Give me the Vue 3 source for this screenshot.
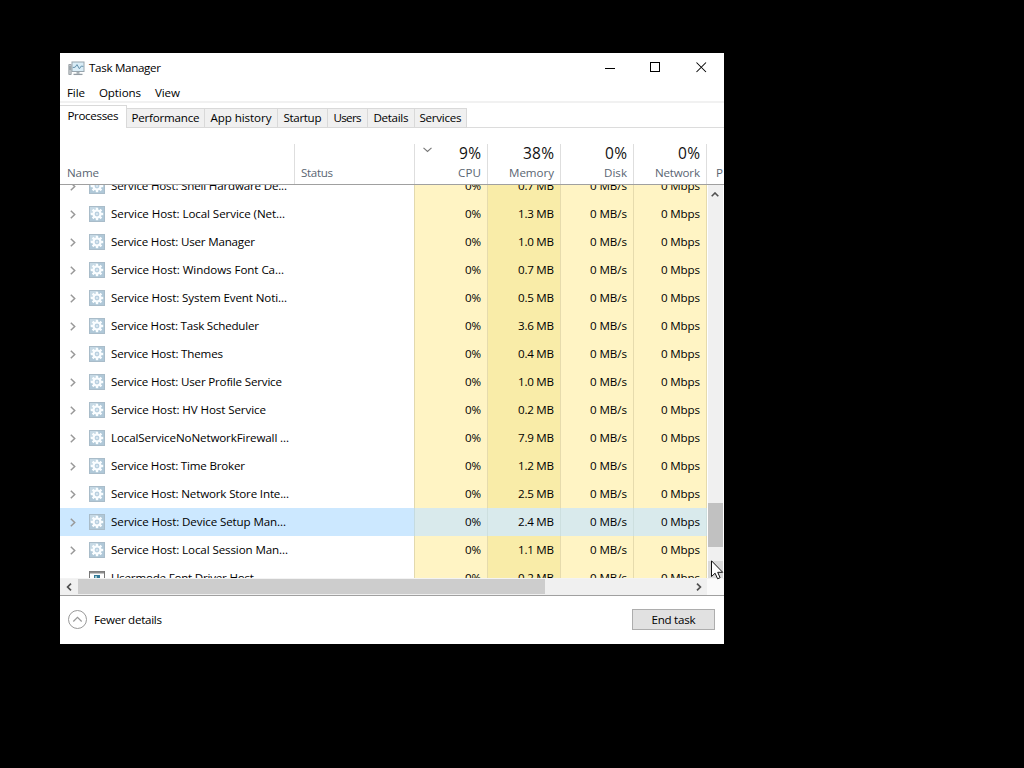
<script setup>
const rows = [
  ['Service Host: Shell Hardware De...', 176, '0.7'],
  ['Service Host: Local Service (Net...', 174, '1.3'],
  ['Service Host: User Manager', 144, '1.0'],
  ['Service Host: Windows Font Ca...', 173, '0.7'],
  ['Service Host: System Event Noti...', 176, '0.5'],
  ['Service Host: Task Scheduler', 148, '3.6'],
  ['Service Host: Themes', 112, '0.4'],
  ['Service Host: User Profile Service', 171, '1.0'],
  ['Service Host: HV Host Service', 155, '0.2'],
  ['LocalServiceNoNetworkFirewall ...', 178, '7.9'],
  ['Service Host: Time Broker', 134, '1.2'],
  ['Service Host: Network Store Inte...', 178, '2.5'],
  ['Service Host: Device Setup Man...', 175, '2.4', true],
  ['Service Host: Local Session Man...', 177, '1.1'],
  ['Usermode Font Driver Host', 143, '0.2'],
].map(([name, width, mem, selected]) => ({ name, width, mem, selected }))

const tabs = [
  ['Performance', 68, 78],
  ['App history', 61, 73],
  ['Startup', 38, 50],
  ['Users', 28, 40],
  ['Details', 35, 47],
  ['Services', 42, 52],
]

const heads = [
  ['9%', 22, 'CPU', 23],
  ['38%', 31, 'Memory', 45],
  ['0%', 22, 'Disk', 23],
  ['0%', 22, 'Network', 45],
]

// Tracks a label so that it fills the given width in pixels.
const vFit = {
  mounted(el, { value }) {
    el.style.letterSpacing = '0px'
    const n = el.textContent.length - 1
    const s = (value - el.getBoundingClientRect().width) / n
    el.style.letterSpacing = s + 'px'
    el.style.marginRight = -s + 'px'
  },
}
const teeth = [0, 45, 90, 135, 180, 225, 270, 315]
</script>

<template>
  <div class="desktop">
    <div class="window">
      <header class="title">
        <svg class="app-icon" width="17" height="15" viewBox="0 0 17 15">
          <path d="M.8 3.500h2.400v10H.8z" fill="#c9ced2" stroke="#8d959b" stroke-width=".8" />
          <path d="M1 6h2M1 8h2" stroke="#697a82" stroke-width=".7" />
          <rect x="4" y="1" width="12" height="9.500" fill="#d9edf7" stroke="#98a5ae" />
          <path d="M4.800 6.500l2.400-.3L9 3.600l2.400 4.200 1.800-2.700 2.200.3" fill="none" stroke="#6592ad" stroke-width="1" />
          <path d="M8.500 11h3v1.800h-3z" fill="#a8b0b5" />
          <path d="M5.500 13.400h9" stroke="#939ca3" stroke-width="1.300" />
        </svg>
        <span v-fit="72">Task Manager</span>
        <svg class="controls" width="103" height="11" viewBox="0 0 103 11">
          <path d="M0 6.500h10" stroke="#000" shape-rendering="crispEdges" />
          <rect x="45.500" y=".5" width="9" height="9" fill="none" stroke="#000" shape-rendering="crispEdges" />
          <path d="M91.500 .5l9.500 9.500M101 .5l-9.500 9.500" stroke="#000" stroke-width="1.050" />
        </svg>
      </header>
      <nav class="menu"><span v-fit="18">File</span><span v-fit="42">Options</span><span v-fit="25">View</span></nav>
      <div class="tabs">
        <div class="tab active"><span v-fit="51">Processes</span></div>
        <div v-for="t in tabs" :key="t[0]" class="tab" :style="{ width: t[2] + 'px' }"><span v-fit="t[1]">{{ t[0] }}</span></div>
      </div>
      <div class="head">
        <div class="h name"><span v-fit="32">Name</span></div>
        <div class="h status"><span v-fit="32">Status</span></div>
        <div v-for="(h, i) in heads" :key="i" class="h num">
          <svg v-if="i === 0" class="sort" width="9" height="6" viewBox="0 0 9 6"><path d="M.5 .8l4 3.700 4-3.700" fill="none" stroke="#777" stroke-width="1.100" /></svg>
          <b v-fit="h[1]">{{ h[0] }}</b>
          <span v-fit="h[3]">{{ h[2] }}</span>
        </div>
        <div class="h last"><span>P</span></div>
      </div>
      <div class="body">
        <div class="list">
          <div class="rows">
            <div v-for="(r, i) in rows" :key="r.name" class="row" :class="{ selected: r.selected }">
              <div class="c name">
                <svg class="chev" width="6" height="9" viewBox="0 0 6 9"><path v-if="i < 14" d="M.8 .7l3.900 3.800-3.900 3.800" fill="none" stroke="#999" stroke-width="1.500" /></svg>
                <svg v-if="i < 14" class="icon" width="16" height="16" viewBox="0 0 16 16">
                  <rect x=".5" y=".5" width="15" height="15" fill="#b0c8d8" stroke="#a9bcc9" />
                  <path d="M1 1h8L1 9z" fill="#c6d9e5" />
                  <g transform="translate(8 8)" fill="#fafdff">
                    <rect v-for="a in teeth" :key="a" x="-1.200" y="-6.200" width="2.400" height="3" :transform="`rotate(${a})`" />
                    <circle r="3.500" fill="#b9d0e0" stroke="#fafdff" stroke-width="2.200" />
                    <circle r="1" fill="#e2edf4" />
                  </g>
                </svg>
                <svg v-else class="icon" width="16" height="16" viewBox="0 0 16 16">
                  <rect x=".5" y="1.500" width="15" height="13" fill="#fff" stroke="#777" />
                  <path d="M1 2.500h14" stroke="#8b8b8b" stroke-width="2" />
                  <path d="M5 5h6v6H5z" fill="#347998" />
                  <path d="M6 6h2v2H6z" fill="#9cc7cc" />
                </svg>
                <span v-fit="r.width">{{ r.name }}</span>
              </div>
              <div class="c status"></div>
              <div class="c num"><span v-fit="16">0%</span></div>
              <div class="c num mem"><span v-fit="36">{{ r.mem }} MB</span></div>
              <div class="c num"><span v-fit="37">0 MB/s</span></div>
              <div class="c num"><span v-fit="39">0 Mbps</span></div>
            </div>
          </div>
        </div>
        <div class="vscroll">
          <svg width="8" height="5" viewBox="0 0 8 5"><path d="M.7 4.300L4 1l3.300 3.300" fill="none" stroke="#505050" stroke-width="1.600" /></svg>
          <div class="vthumb"></div>
          <div class="vdown"></div>
        </div>
      </div>
      <div class="hscroll">
        <svg class="ha" width="6" height="8" viewBox="0 0 6 8"><path d="M5 .6L1.600 4 5 7.400" fill="none" stroke="#505050" stroke-width="1.700" /></svg>
        <div class="hthumb"></div>
        <svg class="hb" width="6" height="8" viewBox="0 0 6 8"><path d="M1 .6L4.400 4 1 7.400" fill="none" stroke="#505050" stroke-width="1.700" /></svg>
      </div>
      <footer>
        <svg width="19" height="19" viewBox="0 0 19 19"><circle cx="9.500" cy="9.500" r="9" fill="#fff" stroke="#999" /><path d="M5.300 11.500l4.200-4.200 4.200 4.200" fill="none" stroke="#999" stroke-width="1.200" /></svg>
        <span class="fewer" v-fit="68">Fewer details</span>
        <button><span v-fit="44">End task</span></button>
      </footer>
    </div>
    <svg class="cursor" width="13" height="20" viewBox="0 0 13 20"><path d="M.5 .8v15.700l3.600-3.300 2.500 5.600 2.500-1.100-2.400-5.400h5z" fill="#fff" stroke="#111" /></svg>
  </div>
</template>

<style>
html, body { margin: 0; background: #000; }
</style>
<style scoped>
.desktop { position: relative; width: 1024px; height: 768px; background: #000; overflow: hidden; font: 11.6px/16px "Open Sans", "Noto Sans", sans-serif; color: #000; box-sizing: border-box; padding: 53px 0 0 60px; }
.desktop * { box-sizing: border-box; }
span, b { white-space: pre; display: inline-block; flex: none; }
svg { display: block; flex: none; }
.window { width: 664px; height: 591px; background: #fff; overflow: hidden; display: flex; flex-direction: column; }
.title { height: 30px; flex: none; display: flex; align-items: center; padding-left: 8px; }
.app-icon { margin-right: 4px; }
.controls { margin: 0 16px 2px auto; }
.menu { height: 20px; flex: none; display: flex; align-items: center; padding-left: 7px; gap: 14px; }
.tabs { flex: none; display: flex; align-items: flex-end; border-top: 2px solid #f1f1f1; height: 27px; margin-top: -2px; background: linear-gradient(#dcdcdc, #dcdcdc) bottom / 100% 1px no-repeat; }
.tab { height: 20px; display: flex; justify-content: center; align-items: center; background: #f0f0f0; border: 1px solid #d9d9d9; border-left: 0; flex: none; }
.tab.active { width: 67px; height: 23px; background: #fff; border-bottom: 0; padding-bottom: 3px; }
.head { height: 57px; flex: none; display: flex; align-items: flex-end; border-bottom: 1px solid #a0a0a0; color: #5a6572; }
.h { height: 40px; border-right: 1px solid #dedede; flex: none; display: flex; flex-direction: column; justify-content: flex-end; padding-bottom: 3px; position: relative; }
.name { width: 235px; padding-left: 7px; }
.status { width: 120px; padding-left: 6px; }
.h.name, .h.status { align-items: flex-start; }
.num { width: 73px; padding-right: 6px; }
.h.num { align-items: flex-end; }
.h b { font-weight: 400; font-size: 15.500px; line-height: 20px; color: #111; margin-bottom: 2px; }
.h.last { border: 0; padding-left: 9px; width: 17px; overflow: hidden; }
.sort { position: absolute; left: 8px; top: 3px; }
.body { display: flex; height: 393px; flex: none; }
.list { width: 647px; overflow: hidden; }
.rows { margin-top: -13px; }
.row { height: 28px; display: flex; }
.c { height: 28px; display: flex; align-items: center; flex: none; }
.c.status { border-right: 1px solid #e2d9ae; }
.c.num { justify-content: flex-end; background: #fff4c4; border-right: 1px solid #e6dbad; }
.c.num.mem { background: #f9eca8; }
.selected .c { background: #cce8ff; }
.selected .c.num, .selected .c.num.mem { background: #d9eaec; border-color: #cddfdf; }
.selected .c.status { border-color: #c5dbe0; }
.chev { margin-left: 3px; }
.icon { margin: 0 6px 0 13px; }
.vscroll { width: 17px; background: #f0f0f0; border-left: 1px solid #fff; border-right: 1px solid #fff; display: flex; flex-direction: column; align-items: center; padding-top: 7px; }
.vscroll svg { margin-right: 1px; }
.vthumb { width: 15px; height: 44px; background: #c1c1c1; margin-top: 306px; }
.vdown { width: 15px; height: 17px; background: #dadada; margin-top: 14px; }
.hscroll { height: 18px; flex: none; border-bottom: 1px solid #a0a0a0; border-top: 1px solid #f3f3f3; display: flex; align-items: center; padding-bottom: 1px; background: linear-gradient(90deg, #f0f0f0 647px, #fafafa 647px); }
.ha { margin: 0 6px; }
.hthumb { width: 467px; height: 15px; background: #cdcdcd; }
.hb { margin-left: 151px; }
footer { height: 47px; flex: none; display: flex; align-items: center; padding: 0 9px 0 8px; }
.fewer { margin-left: 7px; }
button { width: 83px; height: 21px; margin-left: auto; padding: 0; border: 1px solid #adadad; background: #e1e1e1; font: inherit; color: #000; display: flex; justify-content: center; align-items: center; }
.cursor { position: absolute; left: 711px; top: 560px; }
</style>
